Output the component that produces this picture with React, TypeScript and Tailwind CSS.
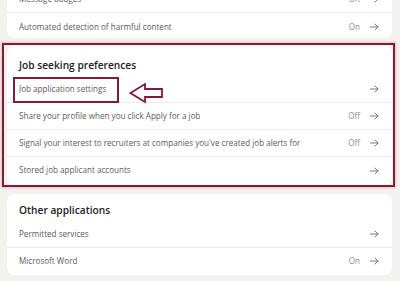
import React from "react";

const font = { fontFamily: '"Open Sans", "Noto Sans", Arial, sans-serif' };

function Arrow() {
  return (
    <svg width="9" height="8" viewBox="0 0 9 8" fill="none" className="shrink-0">
      <path d="M0.5 4H8M5 1L8 4L5 7" stroke="#777" strokeWidth="1" strokeLinecap="round" strokeLinejoin="round" />
    </svg>
  );
}

function Row({ label, value, last, h = "h-[27px]" }: { label: string; value?: string; last?: boolean; h?: string }) {
  return (
    <div className={`flex items-center justify-between pl-[12px] pr-[13px] ${h} ${last ? "" : "border-b border-[#ecebe8]"}`}>
      <span className="text-[8.1px] text-[#5a5a5a] truncate">{label}</span>
      <div className="flex items-center gap-[10px] shrink-0">
        {value && <span className="text-[8.1px] text-[#8f8f8f]">{value}</span>}
        <Arrow />
      </div>
    </div>
  );
}

export default function App() {
  return (
    <div className="w-[400px] h-[281px] bg-[#f4f2ee] relative overflow-hidden" style={font}>
      <div className="pl-[7px] pr-[8px] flex flex-col gap-[8px] -mt-[14px]">
        <div className="bg-white rounded-b-[8px]">
          <Row label="Message badges" value="On" />
          <Row label="Automated detection of harmful content" value="On" last h="h-[25px] pt-[3px]" />
        </div>
        <div className="bg-white rounded-[8px] pt-[11px] pb-[2px]">
          <div className="px-[12px] leading-[16px] text-[10.2px] font-semibold text-[#222]">Job seeking preferences</div>
          <div className="h-[3px]" />
          <Row label="Job application settings" />
          <Row label="Share your profile when you click Apply for a job" value="Off" />
          <Row label="Signal your interest to recruiters at companies you've created job alerts for" value="Off" />
          <Row label="Stored job applicant accounts" last />
        </div>
        <div className="bg-white rounded-[8px] pt-[8px]">
          <div className="px-[12px] leading-[16px] text-[10.2px] font-semibold text-[#222]">Other applications</div>
          <div className="h-[3px]" />
          <Row label="Permitted services" />
          <Row label="Microsoft Word" value="On" last />
        </div>
      </div>

      {/* annotation overlays */}
      <div className="absolute left-[2px] top-[43px] w-[393px] h-[144px] border-2 border-[#86193a] shadow-[0_0_2px_1px_rgba(200,110,130,0.35)] pointer-events-none" />
      <div className="absolute left-[13px] top-[77px] w-[106px] h-[26px] border-2 border-[#86193a] pointer-events-none" />
      <svg className="absolute left-[129px] top-[82px]" width="35" height="22" viewBox="0 0 35 22" fill="none">
        <path d="M1.5 11L16 2V7H33V15H16V20Z" stroke="#86193a" strokeWidth="1.8" strokeLinejoin="miter" fill="white" />
      </svg>
    </div>
  );
}
